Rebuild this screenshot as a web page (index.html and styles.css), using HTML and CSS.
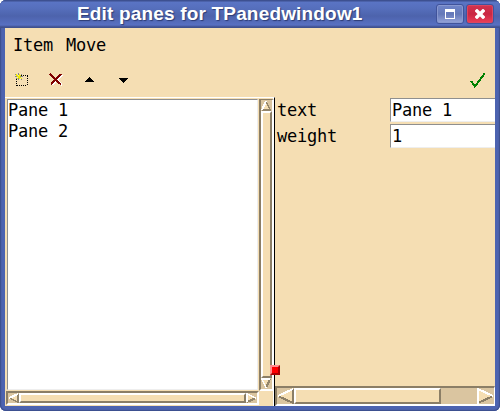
FILE: index.html
```html
<!DOCTYPE html>
<html lang="en">
<head>
<meta charset="utf-8">
<title>Edit panes for TPanedwindow1</title>
<link rel="stylesheet" href="styles.css">
</head>
<body>
<div class="window">
  <header class="titlebar">
    <h1>Edit panes for TPanedwindow1</h1>
    <div class="btn max"><svg width="10" height="10" shape-rendering="crispEdges"><path fill="#fff" fill-rule="evenodd" d="M0 0H10V10H0ZM1 3V9H9V3Z"/></svg></div>
    <div class="btn close"><svg width="10" height="10"><path d="M2 2L8 8M8 2L2 8" stroke="#fff" stroke-width="3.4" stroke-linecap="square"/></svg></div>
  </header>
  <main class="client">
    <nav class="menu"><span>Item</span><span>Move</span></nav>
    <div class="toolbar">
      <svg class="new" width="14" height="14" shape-rendering="crispEdges"><path d="M6 2.500H13M1.500 6V13M12.500 3V13M2 12.500H12" stroke="#000" stroke-dasharray="1 1"/><path d="M0 1h1v1h-1zM6 1h1v1h-1zM1 5h1v1h-1zM6 6h1v1h-1zM3 0h1v2h-1zM0 3h2v1h-2zM5 3h3v1h-3zM3 5h1v2h-1z" fill="#888"/><path d="M1 1h1v1h1v1h1v-2h1v1h1v1h-1v1h1v1h1v1h-1v-1h-1v1h-1v-1h-1v1h-1v-1h1v-1h-1v-1h-1z" fill="#ee0"/></svg>
      <svg class="del" width="15" height="13" shape-rendering="crispEdges"><path d="M2 2L13 12M13 2L3 12" stroke="#fff" stroke-width="2"/><path d="M1 1L12 11.500M12 1L2 11.500" stroke="#800000" stroke-width="2"/></svg>
      <svg class="up" width="10" height="5" shape-rendering="crispEdges"><path d="M4 0h1v1h1v1h1v1h1v1h1v1h-9v-1h1v-1h1v-1h1v-1h1z"/></svg>
      <svg class="down" width="10" height="5" shape-rendering="crispEdges"><path d="M0 0h9v1h-1v1h-1v1h-1v1h-1v1h-1v-1h-1v-1h-1v-1h-1v-1h-1z"/></svg>
      <svg class="ok" width="16" height="16" shape-rendering="crispEdges"><path d="M1 8L5 13.500L14.500 0.500" fill="none" stroke="#008000" stroke-width="2"/></svg>
    </div>
    <div class="panes">
      <section class="left">
        <div class="list"><div>Pane 1</div><div>Pane 2</div></div>
        <div class="vbar">
          <svg width="10" height="11" shape-rendering="crispEdges"><path d="M5 1L9 10H1Z" fill="#f5deb3"/><path d="M5 1L9 10H1" fill="none" stroke="#93856b" stroke-width="1.500"/><path d="M5 1L1 10" stroke="#fff" stroke-width="2"/></svg>
          <div class="thumb"></div>
          <svg width="10" height="11" shape-rendering="crispEdges"><path d="M1 1H9L5 10Z" fill="#f5deb3"/><path d="M9 1L5 10" stroke="#93856b" stroke-width="2"/><path d="M9 1H1L5 10" fill="none" stroke="#fff" stroke-width="1.500"/></svg>
        </div>
        <div class="hbar">
          <svg width="11" height="10" shape-rendering="crispEdges"><path d="M10 1V9L1 5Z" fill="#f5deb3"/><path d="M10 1V9L1 5" fill="none" stroke="#93856b" stroke-width="1.500"/><path d="M10 1L1 5" stroke="#fff" stroke-width="2"/></svg>
          <div class="thumb"></div>
          <svg width="11" height="10" shape-rendering="crispEdges"><path d="M1 1L10 5L1 9Z" fill="#f5deb3"/><path d="M1 9L10 5" stroke="#93856b" stroke-width="2"/><path d="M1 9V1L10 5" fill="none" stroke="#fff" stroke-width="1.500"/></svg>
        </div>
      </section>
      <section class="right">
        <div class="form">
          <label>text</label><div class="entry">Pane 1</div>
          <label>weight</label><div class="entry">1</div>
        </div>
        <div class="bigbar">
          <svg width="17" height="16" shape-rendering="crispEdges"><path d="M16 0V16L1 8Z" fill="#f5deb3"/><path d="M16 1V15L1 8" fill="none" stroke="#8b7e66" stroke-width="2"/><path d="M16 1L1 8" stroke="#fff" stroke-width="2"/></svg>
          <div class="thumb"></div>
          <svg class="end" width="17" height="16" shape-rendering="crispEdges"><path d="M1 0V16L16 8Z" fill="#f5deb3"/><path d="M1 15L16 8" stroke="#8b7e66" stroke-width="2"/><path d="M1 16V1L16 8" fill="none" stroke="#fff" stroke-width="2"/></svg>
        </div>
      </section>
      <div class="handle"></div>
    </div>
  </main>
</div>
</body>
</html>
```
FILE: styles.css
```css
* { box-sizing: border-box; }
body { margin: 0; background: #fff; font: 17px/21px "DejaVu Sans Mono", monospace; letter-spacing: -.234px; color: #000; }
svg { display: block; flex: none; }
.window { width: 500px; height: 411px; padding: 0 5px 5px; border-radius: 6px; background: #4c63b0; box-shadow: inset 0 0 0 1px #3d5090, inset 0 0 0 2px #4c60a8; overflow: hidden; }
.titlebar { height: 28px; margin: 0 -5px; padding: 0 6px 0 77px; display: flex; align-items: center; background: linear-gradient(#3d5090 0 1px, #5a74c4 2px, #566fbd 8px, #4d63ac 16px, #5870c2 25px, #40518f 27px); }
.titlebar h1 { margin: 0; flex: 1; font: bold 19px/28px "Liberation Sans", sans-serif; letter-spacing: .17px; color: #fff; text-shadow: 1px 1px 1px #2d3c74; white-space: nowrap; }
.btn { width: 28px; height: 20px; margin-left: 2px; border: 1px solid #40539b; border-radius: 3px; display: flex; align-items: center; justify-content: center; }
.max { background: linear-gradient(#7186ca, #6478b8 50%, #96a4d9); box-shadow: inset 0 0 0 1px #8898d0; }
.close { background: linear-gradient(#d33550, #c92743 50%, #ed4059); box-shadow: inset 0 0 0 1px #dc4660; }
.client { height: 378px; background: #f5deb3; display: flex; flex-direction: column; }
.menu { height: 34px; padding: 7px 8px; display: flex; gap: 13px; }
.toolbar { height: 35px; display: flex; align-items: center; padding: 0 9px 0 10px; }
.del { margin-left: 20px; }
.up { margin-left: 21px; }
.down { margin-left: 24px; margin-top: 1px; }
.ok { margin-left: auto; margin-top: 2px; }
.panes { height: 309px; position: relative; display: grid; grid-template-columns: 270px 220px; }
.left { display: grid; grid-template: 293px 15px / 254px 15px; border-top: 1px solid #fff; border-right: 1px solid #000; box-shadow: inset -1px 0 #fff; height: 309px; }
.list { margin: 1px 1px 1px 2px; padding: 0; background: #fff; border: 1px solid; border-color: #8f8f8f #eee #eee #8f8f8f; white-space: pre; }
.vbar { margin: 1px 0 0; background: #dac5a0; border: solid; border-color: #8b7e66 #fff #fff #8b7e66; border-width: 1px 2px 2px 2px; display: flex; flex-direction: column; }
.thumb { background: #f5deb3; border: 2px solid; border-color: #fff #8b7e66 #8b7e66 #fff; flex: 1; }
.hbar { height: 14px; margin-left: 1px; background: #dac5a0; border: 2px solid; border-color: #8b7e66 #fff #fff #8b7e66; display: flex; }
.right { display: flex; flex-direction: column; justify-content: space-between; overflow: hidden; }
.form { display: grid; grid-template-columns: 113px 107px; grid-auto-rows: 26px; padding: 1px 0 0 2px; }
.form label { line-height: 25px; }
.entry { width: 120px; height: 24px; padding: 1px 0 0 1px; background: #fff; border: 1px solid; border-color: #8f8f8f #eee #eee #8f8f8f; }
.bigbar { height: 20px; background: #dac5a0; border: 2px solid; border-color: #8b7e66 #fff #fff #8b7e66; border-right-width: 1px; display: flex; }
.bigbar .thumb { flex: none; width: 147px; }
.end { margin-left: auto; }
.handle { position: absolute; left: 265px; top: 268px; width: 10px; height: 10px; background: #f00; border: 2px solid; border-color: #ff8b8b #a00 #a00 #ff8b8b; }
```
